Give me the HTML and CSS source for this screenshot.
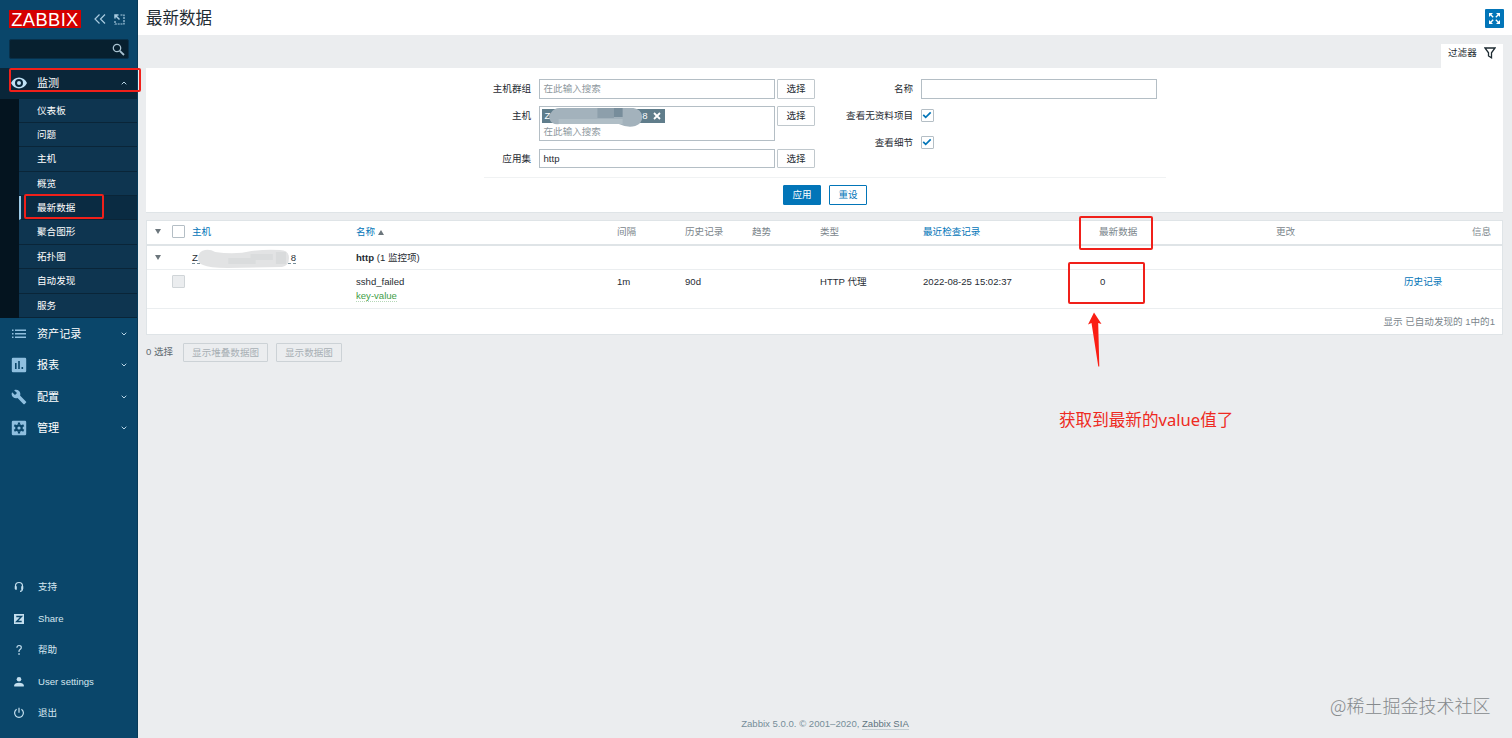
FILE: index.html
```
<!DOCTYPE html>
<html lang="zh-CN">
<head>
    <meta charset="UTF-8">
    <meta name="viewport" content="width=device-width, initial-scale=1.0">
    <title>最新数据</title>
    <link rel="stylesheet" href="styles.css">
</head>
<body>
    <aside class="sidebar">
        <div class="sidebar-header">
            <a class="logo" href="#">ZABBIX</a>
            <svg class="icon-collapse" width="12" height="10" viewBox="0 0 12 10"><path d="M5.5 .5 1 5l4.500 4.500M11 .5 6.500 5 11 9.500"/></svg>
            <svg class="icon-compact" width="11" height="11" viewBox="0 0 11 11"><path d="M6.500 1H10v9H1V6.500" stroke-dasharray="2 .8"/><path d="M1 4.500V1h3.500M1 1l4.500 4.500" stroke-width="1.500"/></svg>
        </div>
        <div class="search">
            <svg width="13" height="13" viewBox="0 0 13 13"><circle cx="5" cy="5" r="3.700"/><path d="m7.800 7.800 4.200 4.200" stroke-width="1.800"/></svg>
        </div>
        <nav class="menu">
            <div class="menu-item open">
                <svg class="menu-icon" width="16" height="16" viewBox="0 0 16 16"><path fill-rule="evenodd" d="M8 2.500C4.500 2.500 1.500 4.700 0 8c1.500 3.300 4.500 5.500 8 5.500s6.500-2.200 8-5.500c-1.500-3.300-4.500-5.500-8-5.500zM8 12a4 4 0 1 1 0-8 4 4 0 0 1 0 8zm0-6a2 2 0 1 0 0 4 2 2 0 0 0 0-4z"/></svg>
                <span>监测</span>
                <svg class="chevron" width="6" height="4" viewBox="0 0 6 4"><path d="M.7 3.300 3 1l2.300 2.300"/></svg>
                <i class="mark mark-menu"></i>
            </div>
            <ul class="submenu">
                <li>仪表板</li>
                <li>问题</li>
                <li>主机</li>
                <li>概览</li>
                <li class="selected">最新数据<i class="mark mark-submenu"></i></li>
                <li>聚合图形</li>
                <li>拓扑图</li>
                <li>自动发现</li>
                <li>服务</li>
            </ul>
            <div class="menu-item">
                <svg class="menu-icon" width="16" height="16" viewBox="0 0 16 16"><path d="M1 3.500h1.500V5H1zM4 3.500h11V5H4zM1 7h1.500v1.500H1zM4 7h11v1.500H4zM1 10.500h1.500V12H1zM4 10.500h11V12H4z"/></svg>
                <span>资产记录</span>
                <svg class="chevron" width="6" height="4" viewBox="0 0 6 4"><path d="M.7.7 3 3 5.300.7"/></svg>
            </div>
            <div class="menu-item">
                <svg class="menu-icon" width="16" height="16" viewBox="0 0 16 16"><path fill-rule="evenodd" d="M2 .8h12q1.200 0 1.200 1.200v12q0 1.200-1.200 1.200H2Q.8 15.200.8 14V2Q.8.800 2 .8zM4 6v6h1.600V6zm3.200-2v8h1.600V4zm3.300 6v2h1.600v-2z"/></svg>
                <span>报表</span>
                <svg class="chevron" width="6" height="4" viewBox="0 0 6 4"><path d="M.7.7 3 3 5.300.7"/></svg>
            </div>
            <div class="menu-item">
                <svg class="menu-icon" width="16" height="16" viewBox="0 0 24 24"><path d="m22.700 19-9.100-9.100c.9-2.300.4-5-1.500-6.900-2-2-5-2.400-7.400-1.300L9 6 6 9 1.600 4.700C.4 7.100.9 10.100 2.900 12.100c1.900 1.900 4.600 2.400 6.900 1.500l9.100 9.100c.4.400 1 .4 1.400 0l2.300-2.300c.5-.4.500-1.100.1-1.400z"/></svg>
                <span>配置</span>
                <svg class="chevron" width="6" height="4" viewBox="0 0 6 4"><path d="M.7.7 3 3 5.300.7"/></svg>
            </div>
            <div class="menu-item">
                <svg class="menu-icon" width="16" height="16" viewBox="0 0 16 16"><path d="M2 .8h12q1.200 0 1.200 1.200v12q0 1.200-1.200 1.200H2Q.8 15.200.8 14V2Q.8.800 2 .8z"/><g stroke="#0a466a" fill="none"><circle cx="8" cy="8" r="2.700" stroke-width="2.200"/><path stroke-width="2.200" d="M8 2.600v2M8 11.400v2M3.300 5.300l1.800 1M10.900 9.700l1.800 1M3.300 10.700l1.800-1M10.900 6.300l1.800-1"/></g></svg>
                <span>管理</span>
                <svg class="chevron" width="6" height="4" viewBox="0 0 6 4"><path d="M.7.7 3 3 5.300.7"/></svg>
            </div>
        </nav>
        <nav class="user-menu">
            <div class="user-item">
                <svg width="12" height="12" viewBox="0 0 12 12"><path class="line" d="M2.500 8V5a3.500 3.500 0 0 1 7 0v3M7 10.300q2.500 0 2.500-2.500"/><path d="M1.800 5.200h2v3.500h-1q-1 0-1-1zM8.200 5.200h2v2.500q0 1-1 1h-1z"/></svg>
                <span>支持</span>
            </div>
            <div class="user-item">
                <svg width="12" height="12" viewBox="0 0 12 12"><path d="M1 1h10v10H1z"/><path d="M3.300 3.500h5.200l-4.800 5h5" fill="none" stroke="#0a466a" stroke-width="1.400"/></svg>
                <span>Share</span>
            </div>
            <div class="user-item">
                <svg width="12" height="12" viewBox="0 0 12 12"><path class="line" d="M3.900 3.700q0-2.200 2.200-2.200t2.200 2Q8.300 4.700 7 5.500T6 8"/><path d="M5.300 9.300h1.500v1.500H5.300z"/></svg>
                <span>帮助</span>
            </div>
            <div class="user-item">
                <svg width="12" height="12" viewBox="0 0 12 12"><circle cx="6" cy="3.300" r="2.300"/><path d="M1.200 10.500V9.300Q1.500 7 6 6.800q4.500.2 4.800 2.500v1.200z"/></svg>
                <span>User settings</span>
            </div>
            <div class="user-item">
                <svg width="12" height="12" viewBox="0 0 12 12"><path class="line" d="M3.600 2.300a4.400 4.400 0 1 0 4.800 0M6 .8v5"/></svg>
                <span>退出</span>
            </div>
        </nav>
    </aside>

    <div class="wrapper">
        <header class="page-header">
            <h1>最新数据</h1>
            <button class="btn-kiosk">
                <svg width="13" height="13" viewBox="0 0 13 13"><path class="solid" d="M1 1h4L1 5zM12 1v4L8 1zM1 12V8l4 4zM12 12H8l4-4z"/><path d="m2 2 3.200 3.200M11 2 7.800 5.200M2 11l3.200-3.200M11 11 7.800 7.800"/></svg>
            </button>
        </header>

        <main>
            <div class="filter-tab">
                <span>过滤器</span>
                <svg width="12" height="12" viewBox="0 0 12 12"><path d="M1 1h10L7.500 5.800v5L4.500 9V5.800z"/></svg>
            </div>
            <form class="filter">
                <div class="filter-forms">
                    <div class="filter-col">
                        <div class="row">
                            <label>主机群组</label>
                            <div class="field placeholder">在此输入搜索</div>
                            <button type="button" class="btn">选择</button>
                        </div>
                        <div class="row">
                            <label>主机</label>
                            <div class="field multiselect">
                                <div class="tag">
                                    <span>Z</span><span>8</span>
                                    <svg width="8" height="8" viewBox="0 0 8 8"><path d="m1 1 6 6M7 1 1 7"/></svg>
                                    <svg class="smudge-tag" width="95" height="20" viewBox="0 0 98 20" preserveAspectRatio="none">
                                        <path fill="#a3b2bc" d="M3 6Q6 1 12 1h76q8 1 9 8t-7 10q-8 2-17-2H12Q4 18 2 13t1-7z"/>
                                        <path fill="#8d9fab" d="M51 1h17v10H51z"/>
                                        <path fill="#778d9b" d="M68 1h9v9h-9z"/>
                                        <path fill="#b0bec6" d="M11 12h66v5H11z"/>
                                    </svg>
                                </div>
                                <span class="placeholder">在此输入搜索</span>
                            </div>
                            <button type="button" class="btn">选择</button>
                        </div>
                        <div class="row">
                            <label>应用集</label>
                            <div class="field">http</div>
                            <button type="button" class="btn">选择</button>
                        </div>
                    </div>
                    <div class="filter-col filter-col-right">
                        <div class="row">
                            <label>名称</label>
                            <div class="field"></div>
                        </div>
                        <div class="row">
                            <label>查看无资料项目</label>
                            <span class="checkbox"><svg width="10" height="8" viewBox="0 0 10 8"><path d="m1.200 3.800 2.500 2.500 5-5"/></svg></span>
                        </div>
                        <div class="row">
                            <label>查看细节</label>
                            <span class="checkbox"><svg width="10" height="8" viewBox="0 0 10 8"><path d="m1.200 3.800 2.500 2.500 5-5"/></svg></span>
                        </div>
                    </div>
                </div>
                <div class="filter-buttons">
                    <button type="button" class="btn btn-primary">应用</button>
                    <button type="button" class="btn btn-alt">重设</button>
                </div>
            </form>

            <table class="list-table">
                <colgroup>
                    <col class="c-toggle"><col class="c-check"><col class="c-host"><col class="c-name"><col class="c-interval"><col class="c-history"><col class="c-trends"><col class="c-type"><col class="c-last"><col class="c-value"><col class="c-change"><col class="c-action"><col class="c-info">
                </colgroup>
                <thead>
                    <tr>
                        <th><i class="arrow-down"></i></th>
                        <th><span class="checkbox"></span></th>
                        <th><a href="#">主机</a></th>
                        <th><a href="#">名称<i class="arrow-up"></i></a></th>
                        <th>间隔</th>
                        <th>历史记录</th>
                        <th>趋势</th>
                        <th>类型</th>
                        <th><a href="#">最近检查记录</a></th>
                        <th>最新数据</th>
                        <th>更改</th>
                        <th></th>
                        <th class="right">信息</th>
                    </tr>
                </thead>
                <tbody>
                    <tr class="group">
                        <td><i class="arrow-down"></i></td>
                        <td></td>
                        <td>
                            <div class="host">
                                <span>Z</span><span>8</span>
                                <svg class="smudge-host" width="93" height="20" viewBox="0 0 92 20" preserveAspectRatio="none">
                                    <path fill="#e2e3e4" d="M1 10Q1 2 8 1q5-1 10 2 20 3 36-1 15-2 28-1 9 0 9 8 0 8-7 9l-54 1q-18 0-24-3-5-2-5-6z"/>
                                    <path fill="#dadcdd" d="M31 9h22V5h22v6H58v4H31z"/>
                                    <path fill="#d9dbdc" d="M78 3h10v12H78z"/>
                                </svg>
                            </div>
                        </td>
                        <td colspan="10"><b>http</b> (1 监控项)</td>
                    </tr>
                    <tr class="item">
                        <td></td>
                        <td><span class="checkbox disabled"></span></td>
                        <td></td>
                        <td>sshd_failed<br><span class="key">key-value</span></td>
                        <td>1m</td>
                        <td>90d</td>
                        <td></td>
                        <td>HTTP 代理</td>
                        <td>2022-08-25 15:02:37</td>
                        <td><span class="value">0</span></td>
                        <td></td>
                        <td><a href="#">历史记录</a></td>
                        <td></td>
                    </tr>
                    <tr class="total">
                        <td colspan="13">显示 已自动发现的 1中的1</td>
                    </tr>
                </tbody>
            </table>

            <div class="action-buttons">
                <span>0 选择</span>
                <button class="btn" disabled>显示堆叠数据图</button>
                <button class="btn" disabled>显示数据图</button>
            </div>
        </main>

        <footer>Zabbix 5.0.0. © 2001–2020, <a href="#">Zabbix SIA</a></footer>
    </div>

    <!-- annotations over the page -->
    <i class="mark mark-column"></i>
    <i class="mark mark-value"></i>
    <svg class="note-arrow" width="16" height="56" viewBox="0 0 16 56"><path d="M7 .5 14.500 12l-3.300-1L12.300 54.500h-1L4.500 11 1 12.500z"/></svg>
    <div class="note">获取到最新的value值了</div>
    <div class="watermark">@稀土掘金技术社区</div>
</body>
</html>
```
FILE: styles.css
```
* {
    box-sizing: border-box;
}

body {
    display: flex;
    height: 738px;
    margin: 0;
    overflow: hidden;
    background-color: #ebedef;
    color: #1f2c33;
    font: 9.57px/14px "Liberation Sans", "Noto Sans CJK SC", sans-serif;
}

a {
    color: #0275b8;
    text-decoration: none;
}

svg {
    display: block;
    flex: none;
}

/* Sidebar */
.sidebar {
    display: flex;
    flex-direction: column;
    flex: none;
    width: 138px;
    padding-bottom: 9px;
    background-color: #0a466a;
    border-right: 1px solid #083a58;
    color: #fff;
}

.sidebar-header {
    display: flex;
    align-items: center;
    height: 38px;
    padding-left: 9px;
}

.logo {
    width: 72px;
    height: 18px;
    margin-right: 13px;
    background-color: #d40000;
    color: #fff;
    font-size: 18.3px;
    letter-spacing: .4px;
    line-height: 19px;
    text-align: center;
}

.sidebar-header svg {
    fill: none;
    stroke: #a9cbe0;
    stroke-width: 1.2;
}

.icon-compact {
    margin-left: 8px;
}

.search {
    display: flex;
    align-items: center;
    justify-content: flex-end;
    height: 20px;
    margin: 1px 8px 9px 9px;
    padding-right: 3px;
    background-color: #07202f;
    border: 1px solid #08304a;
    border-radius: 2px;
}

.search svg {
    fill: none;
    stroke: #a9c3d2;
    stroke-width: 1.3;
}

.menu-item {
    position: relative;
    display: flex;
    align-items: center;
    height: 31.5px;
    padding: 0 10px 0 11px;
    font-size: 11.1px;
}

.menu-item.open {
    height: 30.5px;
    background-color: #0a2639;
}

.menu-icon {
    margin-right: 10px;
    fill: #8fbfdf;
}

.open .menu-icon {
    fill: #c0e1f5;
}

.chevron {
    margin-left: auto;
    fill: none;
    stroke: #b8d5e6;
}

.submenu {
    margin: 0;
    padding: 0;
    border-left: 19px solid #04141f;
    list-style: none;
}

.submenu li {
    position: relative;
    height: 24.4px;
    padding-left: 18px;
    background-color: #0e3550;
    border-bottom: 1px solid #0a2538;
    line-height: 24px;
}

.submenu .selected {
    padding-left: 16px;
    background-color: #0a2b42;
    border-left: 2px solid #9ccbe8;
}

.user-menu {
    margin-top: auto;
}

.user-item {
    display: flex;
    align-items: center;
    height: 31.5px;
    padding-left: 13px;
    gap: 13px;
    color: #d5e6f0;
}

.user-item svg {
    fill: #c4dfef;
}

.user-item .line {
    fill: none;
    stroke: #c4dfef;
    stroke-width: 1.2;
}

/* Page */
.wrapper {
    display: flex;
    flex-direction: column;
    flex: 1;
}

.page-header {
    display: flex;
    align-items: center;
    justify-content: space-between;
    height: 35px;
    padding: 0 8px;
    background-color: #fff;
}

h1 {
    margin: 0;
    font-size: 16.5px;
    font-weight: normal;
}

.btn-kiosk {
    display: flex;
    align-items: center;
    justify-content: center;
    width: 19px;
    height: 19px;
    margin-top: 1px;
    padding: 0;
    background-color: #0275b8;
    border: 0;
    border-radius: 1px;
}

.btn-kiosk svg {
    fill: none;
    stroke: #fff;
    stroke-width: 1.3;
}

.btn-kiosk .solid {
    fill: #fff;
    stroke: none;
}

main {
    display: flex;
    flex-direction: column;
    flex: 1;
    padding: 9px 9px 0 8px;
}

.filter-tab {
    display: flex;
    align-items: center;
    align-self: flex-end;
    justify-content: space-between;
    width: 62px;
    height: 24px;
    padding: 0 7px;
    padding-bottom: 6px;
    background-color: #fff;
}

.filter-tab svg {
    fill: none;
    stroke: #1f2c33;
    stroke-width: 1.3;
}

.filter {
    height: 145px;
    padding: 11px 337px 0 338px;
    background-color: #fff;
    border-bottom: 1px solid #dfe4e7;
}

.filter-forms {
    display: flex;
    height: 99px;
    border-bottom: 1px solid #f0f2f3;
}

.filter-col {
    display: flex;
    flex: none;
    flex-direction: column;
    width: 330px;
    gap: 7.5px;
}

.row {
    display: flex;
    min-height: 19.5px;
    line-height: 19px;
}

.row label {
    flex: none;
    width: 47px;
    margin-right: 7.5px;
    text-align: right;
    white-space: nowrap;
}

.filter-col-right label {
    width: 99px;
}

.filter-col-right {
    width: 343px;
}

.field {
    flex: none;
    width: 236.5px;
    height: 19.5px;
    padding-left: 4px;
    background-color: #fff;
    border: 1px solid #b4bec5;
    line-height: 18px;
}

.placeholder {
    color: #8e989e;
}

.multiselect {
    height: 35px;
    padding: 2px;
}

.multiselect .placeholder {
    display: block;
    padding-left: 2px;
    line-height: 17px;
}

.tag {
    position: relative;
    display: flex;
    align-items: center;
    width: 123px;
    height: 14px;
    padding: 0 4px 0 3px;
    background-color: #607d8b;
    color: #fff;
}

.tag > svg:not(.smudge-tag) {
    margin-left: 5px;
    fill: none;
    stroke: #fff;
    stroke-width: 1.8;
}

.tag span:nth-child(2) {
    margin-left: auto;
}

.smudge-tag {
    position: absolute;
    left: 6px;
    top: -2px;
}

.btn {
    flex: none;
    width: 38px;
    height: 19.5px;
    margin-left: 2px;
    padding: 0;
    background-color: #fff;
    border: 1px solid #c0c8cd;
    border-radius: 1px;
    color: #1f2c33;
    font: inherit;
    line-height: 17px;
}

.checkbox {
    display: flex;
    align-items: center;
    justify-content: center;
    width: 13px;
    height: 13px;
    background-color: #fff;
    border: 1px solid #b4bec5;
    border-radius: 1px;
}

.row .checkbox {
    margin-top: 2.5px;
}

.checkbox svg {
    fill: none;
    stroke: #0275b8;
    stroke-width: 1.7;
}

.checkbox.disabled {
    background-color: #ebedef;
    border-color: #d0d5d8;
}

.filter-buttons {
    display: flex;
    justify-content: center;
    padding-top: 7px;
    padding-right: 2px;
    gap: 6px;
}

.filter-buttons .btn-primary {
    background-color: #0275b8;
    border-color: #0275b8;
    color: #fff;
}

.filter-buttons .btn-alt {
    border-color: #0275b8;
    color: #0275b8;
}

/* Data table */
.list-table {
    width: 1357px;
    margin-top: 7px;
    background-color: #fff;
    border: 1px solid #dfe4e7;
    border-collapse: separate;
    border-spacing: 0;
    table-layout: fixed;
}

.c-toggle { width: 21px; }
.c-check { width: 20px; }
.c-host { width: 164px; }
.c-name { width: 261px; }
.c-interval { width: 68px; }
.c-history { width: 67px; }
.c-trends { width: 68px; }
.c-type { width: 103px; }
.c-last { width: 176px; }
.c-value { width: 177px; }
.c-change { width: 128px; }
.c-action { width: 50px; }
.c-info { width: 52px; }

.list-table th,
.list-table td {
    padding: 0 4px;
    border-bottom: 1px solid #ebeef0;
    text-align: left;
    vertical-align: middle;
    white-space: nowrap;
}

.list-table th {
    height: 25px;
    padding-bottom: 2px;
    border-bottom: 2px solid #dfe4e7;
    color: #7b868c;
    font-weight: normal;
}

.list-table th.right {
    padding-right: 11px;
    text-align: right;
}

.list-table .group td {
    height: 24px;
}

.list-table .item td {
    height: 39px;
    padding-top: 5px;
    vertical-align: top;
}

.list-table .total td {
    height: 25px;
    padding-right: 7px;
    border-bottom: 0;
    color: #7b868c;
    text-align: right;
}

.arrow-down {
    display: block;
    width: 0;
    margin-left: 4px;
    border: 3px solid transparent;
    border-top: 5px solid #6c767c;
    border-bottom: 0;
}

.arrow-up {
    display: inline-block;
    margin-left: 3px;
    border: 3px solid transparent;
    border-top: 0;
    border-bottom: 5px solid #6c767c;
}

.host {
    position: relative;
    display: flex;
    justify-content: space-between;
    width: 104px;
    height: 13px;
    border-bottom: 1px dashed #768d99;
}

.smudge-host {
    position: absolute;
    left: 5px;
    top: -2px;
}

.key {
    border-bottom: 1px dotted #b5d8b8;
    color: #429e47;
}

.value {
    padding-left: 1px;
}

.action-buttons {
    display: flex;
    align-items: center;
    margin-top: 7.5px;
    color: #5f6b72;
}

.action-buttons .btn {
    width: auto;
    margin-left: 8px;
    padding: 0 8px;
    background-color: transparent;
    border-color: #ccd2d6;
    color: #a8b0b5;
}

.action-buttons span {
    margin-right: 2px;
}

footer {
    padding-bottom: 7px;
    color: #768d99;
    text-align: center;
}

footer a {
    border-bottom: 1px solid #c3cdd2;
    color: #5f7480;
}

/* Annotations */
.mark {
    position: absolute;
    border: 2px solid #f0201a;
    border-radius: 2px;
}

.mark-menu {
    left: 9px;
    top: 0;
    z-index: 1;
    width: 132px;
    height: 24px;
}

.mark-submenu {
    left: 3px;
    top: -2px;
    width: 80px;
    height: 25px;
}

.mark-column {
    left: 1079px;
    top: 216px;
    width: 74px;
    height: 34px;
}

.mark-value {
    left: 1068px;
    top: 262px;
    width: 77px;
    height: 42px;
}

.note-arrow {
    position: absolute;
    left: 1087px;
    top: 312px;
    fill: #fa1e14;
}

.note {
    position: absolute;
    left: 1059px;
    top: 408px;
    color: #ee2a22;
    font: 16.6px/24px "Noto Sans", "Noto Sans CJK SC", sans-serif;
}

.watermark {
    position: absolute;
    left: 1330px;
    top: 692px;
    color: #85898c;
    font: 300 18px/26px "Noto Sans CJK SC", sans-serif;
}
```
